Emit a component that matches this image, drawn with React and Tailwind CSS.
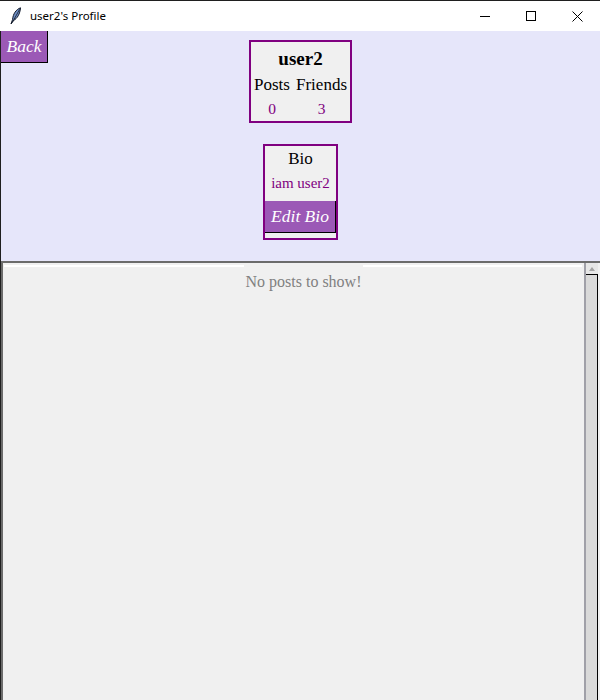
import React from 'react'

function Feather() {
  return (
    <svg width="12" height="18" viewBox="0 0 12 18" className="shrink-0">
      <path d="M10.5 0.8 C6 2.5 3 7 2.6 12.4 L1 17 L3.4 13.6 C7.2 11.6 10 7 10.5 0.8 Z" fill="#6f8fc4" stroke="#101828" strokeWidth="1" strokeLinejoin="round" />
      <path d="M9.6 2.4 L2.2 15.6" stroke="#101828" strokeWidth="0.8" />
    </svg>
  )
}

function TitleBar() {
  return (
    <div className="flex h-[31px] items-center border-t border-[#1f1f1f] bg-white font-['Noto_Sans',sans-serif]">
      <div className="flex flex-1 items-center gap-[8px] pl-[10px]">
        <Feather />
        <span className="text-[11.5px] text-black">user2's Profile</span>
      </div>
      <div className="flex h-full">
        <div className="flex w-[46px] items-center justify-center">
          <div className="h-px w-[10px] bg-black" />
        </div>
        <div className="flex w-[46px] items-center justify-center">
          <div className="h-[10px] w-[10px] border border-black" />
        </div>
        <div className="flex w-[46px] items-center justify-center">
          <svg width="11" height="11" viewBox="0 0 11 11">
            <path d="M0.5 0.5 L10.5 10.5 M10.5 0.5 L0.5 10.5" stroke="#000" strokeWidth="1" />
          </svg>
        </div>
      </div>
    </div>
  )
}

function ProfileBox() {
  return (
    <div className="mt-[9px] w-[103px] border-2 border-[#800080] bg-[#f0f0f0] pt-[3px]">
      <div className="h-[28px] text-center text-[19px] font-bold leading-[28px] text-black">user2</div>
      <div className="grid grid-cols-[42px_57px]">
        <div className="h-[24px] text-center text-[17px] leading-[24px] text-black">Posts</div>
        <div className="h-[24px] text-center text-[17px] leading-[24px] text-black">Friends</div>
        <div className="h-[24px] text-center text-[15.5px] leading-[24px] text-[#800080]">0</div>
        <div className="h-[24px] text-center text-[15.5px] leading-[24px] text-[#800080]">3</div>
      </div>
    </div>
  )
}

function BioBox() {
  return (
    <div className="mt-[21px] flex w-[75px] flex-col border-2 border-[#800080] bg-[#f0f0f0]">
      <div className="h-[26px] text-center text-[17px] leading-[26px] text-black">Bio</div>
      <div className="h-[23px] text-center text-[15px] leading-[23px] text-[#800080]">iam user2</div>
      <button className="mt-[6px] mb-[5px] flex h-[32px] items-center justify-center border-r border-b border-black bg-[#9b59b6] text-[17.5px] italic text-white">
        Edit Bio
      </button>
    </div>
  )
}

function Scrollbar() {
  return (
    <div className="flex w-[16px]">
      <div className="flex w-[14px] flex-col border-l-2 border-[#a0a0a8] bg-[#d9d9d9]">
        <div className="flex h-[12px] items-center justify-center border-b border-black bg-[#e6e6e6]">
          <div className="h-0 w-0 border-x-[3.5px] border-b-[4px] border-x-transparent border-b-[#a3a3a3]" />
        </div>
        <div className="flex-1 border-r border-black" />
      </div>
      <div className="w-[2px] bg-[#f0f0f0]" />
    </div>
  )
}

export default function App() {
  return (
    <div className="flex h-[700px] w-[600px] flex-col overflow-hidden bg-white">
      <TitleBar />
      <div className="flex flex-1 flex-col border-l border-[#1f1f1f] font-['Liberation_Serif',serif]">
        <div className="flex h-[230px] flex-col bg-[#e6e6fa]">
          <div className="grid grid-cols-[1fr_auto_1fr] items-start">
            <button className="flex h-[32px] w-[47px] items-center justify-center justify-self-start border-r border-b border-black bg-[#9b59b6] text-[17.5px] italic text-white">
              Back
            </button>
            <ProfileBox />
            <div />
          </div>
          <div className="flex justify-center">
            <BioBox />
          </div>
        </div>
        <div className="flex flex-1 border-t-2 border-l-2 border-[#6b6b6b] bg-[#f0f0f0]">
          <div className="flex-1 pt-[2px] pl-[1px] pr-[2px]">
            <div className="flex items-start">
              <div className="h-[2px] w-[240px] bg-white" />
              <div className="w-[119px] text-center text-[16px] leading-[34px] text-[#808080]">No posts to show!</div>
              <div className="h-[2px] flex-1 bg-white" />
            </div>
          </div>
          <Scrollbar />
        </div>
      </div>
    </div>
  )
}
